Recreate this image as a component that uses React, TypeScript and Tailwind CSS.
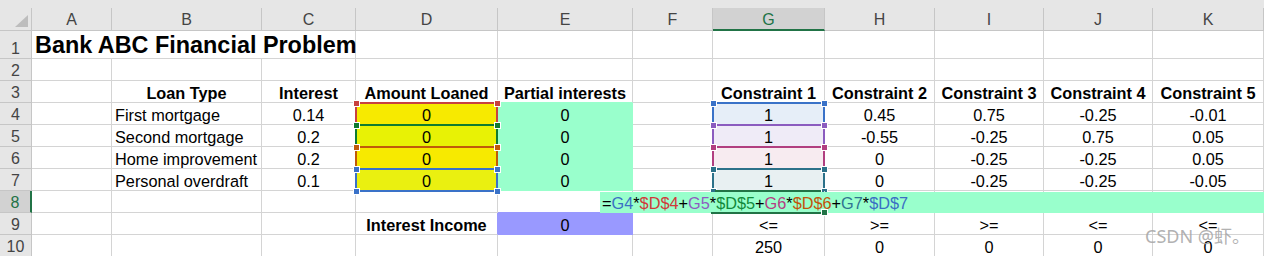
import { Fragment, type ReactNode } from 'react'

type Ref = { line: string; dot: string }

type Cell = {
  v?: ReactNode
  bold?: boolean
  left?: boolean
  title?: boolean
  cls?: string
  hl?: Ref
}

const COLS = ['A', 'B', 'C', 'D', 'E', 'F', 'G', 'H', 'I', 'J', 'K']
const ROWS = [1, 2, 3, 4, 5, 6, 7, 8, 9, 10]

const MINT = 'bg-[#99ffcc] border-[#99ffcc]'
const GRID = 'border-[#d4d4d4]'

// range highlight colours, in the order the formula references them
const blue: Ref = { line: 'border-[#3a72c8]', dot: 'bg-[#3a72c8]' }
const red: Ref = { line: 'border-[#c8413f]', dot: 'bg-[#c8413f]' }
const purple: Ref = { line: 'border-[#8b5cbf]', dot: 'bg-[#8b5cbf]' }
const green: Ref = { line: 'border-[#0f7b30]', dot: 'bg-[#0f7b30]' }
const magenta: Ref = { line: 'border-[#b13f80]', dot: 'bg-[#b13f80]' }
const orange: Ref = { line: 'border-[#c05a0a]', dot: 'bg-[#c05a0a]' }
const teal: Ref = { line: 'border-[#2c7189]', dot: 'bg-[#2c7189]' }

const loans: [string, number, number[]][] = [
  ['First mortgage', 0.14, [0.45, 0.75, -0.25, -0.01]],
  ['Second mortgage', 0.2, [-0.55, -0.25, 0.75, 0.05]],
  ['Home improvement', 0.2, [0, -0.25, -0.25, 0.05]],
  ['Personal overdraft', 0.1, [0, -0.25, -0.25, -0.05]],
]

const amountFill = [
  'bg-[#f7ea00] border-[#f7ea00]',
  'bg-[#e8f205] border-[#e8f205]',
  'bg-[#f7ea00] border-[#f7ea00]',
  'bg-[#eaf010] border-[#eaf010]',
]
const amountRef = [red, green, orange, blue]
const constraintFill = [
  'bg-[#e6eef8] border-[#e6eef8]',
  'bg-[#efebf7] border-[#efebf7]',
  'bg-[#f7ebf0] border-[#f7ebf0]',
  'bg-[#e8f0f2] border-[#e8f0f2]',
]
const constraintRef = [blue, purple, magenta, teal]

const sheet: Record<string, Cell> = {
  A1: { v: 'Bank ABC Financial Problem', title: true },
  B3: { v: 'Loan Type', bold: true },
  C3: { v: 'Interest', bold: true },
  D3: { v: 'Amount Loaned', bold: true },
  E3: { v: 'Partial interests', bold: true, cls: 'border-r-[#d4d4d4] border-b-[#99ffcc]' },
  G3: { v: 'Constraint 1', bold: true },
  H3: { v: 'Constraint 2', bold: true },
  I3: { v: 'Constraint 3', bold: true },
  J3: { v: 'Constraint 4', bold: true },
  K3: { v: 'Constraint 5', bold: true },
  E8: { cls: 'border-r-[#d4d4d4] border-b-[#9999ff]' },
  D9: { v: 'Interest Income', bold: true, cls: 'border-r-[#9999ff] border-b-[#d4d4d4]' },
  E9: { v: 0, cls: 'bg-[#9999ff] border-[#9999ff]' },
  G9: { v: '<=' },
  H9: { v: '>=' },
  I9: { v: '>=' },
  J9: { v: '<=' },
  K9: { v: '<=' },
  G10: { v: 250 },
  H10: { v: 0 },
  I10: { v: 0 },
  J10: { v: 0 },
  K10: { v: 0 },
}

loans.forEach(([name, rate, coeffs], i) => {
  const r = i + 4
  sheet[`B${r}`] = { v: name, left: true }
  sheet[`C${r}`] = { v: rate }
  sheet[`D${r}`] = { v: 0, cls: amountFill[i], hl: amountRef[i] }
  sheet[`E${r}`] = { v: 0, cls: MINT }
  sheet[`G${r}`] = { v: 1, cls: constraintFill[i], hl: constraintRef[i] }
  ;['H', 'I', 'J', 'K'].forEach((c, j) => {
    sheet[`${c}${r}`] = { v: coeffs[j] }
  })
})

const formula: [string, string][] = [
  ['=', ''],
  ['G4', 'text-[#3a6fc4]'],
  ['*', ''],
  ['$D$4', 'text-[#d13a3a]'],
  ['+', ''],
  ['G5', 'text-[#8e5cc0]'],
  ['*', ''],
  ['$D$5', 'text-[#128a3c]'],
  ['+', ''],
  ['G6', 'text-[#b43e82]'],
  ['*', ''],
  ['$D$6', 'text-[#c2540a]'],
  ['+', ''],
  ['G7', 'text-[#2f7391]'],
  ['*', ''],
  ['$D$7', 'text-[#3a6fc4]'],
]

function RefBox({ line, dot }: Ref) {
  const sq = `absolute h-[7px] w-[7px] border border-white ${dot}`
  return (
    <div
      className={`pointer-events-none absolute -left-[1px] -top-[1px] h-[calc(100%+3px)] w-[calc(100%+2px)] border-2 ${line}`}
    >
      <span className={`${sq} -left-[4px] -top-[4px]`} />
      <span className={`${sq} -right-[5px] -top-[4px]`} />
      <span className={`${sq} -bottom-[5px] -left-[4px]`} />
      <span className={`${sq} -bottom-[5px] -right-[5px]`} />
    </div>
  )
}

// G8 is being edited: the editor box spills over F8..K8, framed by the active-cell border
function ActiveEditor() {
  return (
    <>
      <div className="absolute -left-[113px] top-[1px] flex h-[21px] w-[664px] items-end whitespace-nowrap bg-[#99ffcc] pb-[1px] pl-[2px] text-[16.3px] leading-[18px]">
        {formula.map(([t, color], i) => (
          <span key={i} className={color}>
            {t}
          </span>
        ))}
      </div>
      <div className="absolute left-[2px] -top-[1px] h-[2px] w-[106px] bg-[#217346]" />
      <div className="absolute -left-[2px] top-[21px] h-[2px] w-[112px] bg-[#217346]" />
      <div className="absolute left-[108px] top-[18px] h-[7px] w-[7px] border border-white bg-[#217346]" />
    </>
  )
}

function SheetCell({ id }: { id: string }) {
  const cell = sheet[id] ?? {}
  if (cell.title) {
    return (
      <div className="col-span-3 flex items-end whitespace-nowrap border-b border-r border-[#d4d4d4] pl-[3px] text-[23.4px] font-bold leading-[26px]">
        {cell.v}
      </div>
    )
  }
  if (id === 'G8') {
    return (
      <div className="relative border-b border-r border-[#d4d4d4]">
        <ActiveEditor />
      </div>
    )
  }
  return (
    <div
      className={`flex items-end whitespace-nowrap border-b border-r leading-[18px] ${
        cell.left ? 'justify-start pl-[3px]' : 'justify-center'
      } ${cell.bold ? 'font-bold' : ''} ${cell.cls ?? GRID} ${cell.hl ? 'relative' : ''}`}
    >
      {cell.v}
      {cell.hl && <RefBox {...cell.hl} />}
    </div>
  )
}

export default function App() {
  return (
    <div className="relative h-[256px] w-[1264px] overflow-hidden bg-white font-['Liberation_Sans',Arial,sans-serif] text-[16.3px] text-black">
      <div className="h-[8px] bg-[#e6e6e6]" />
      <div className="grid grid-cols-[32px_80px_150px_94px_142px_135px_80px_112px_110px_109px_109px_111px] grid-rows-[23px_28px_22px_22px_22px_22px_22px_22px_22px_22px_22px]">
        {/* corner + column letters */}
        <div className="flex items-end justify-end border-b border-r border-[#c6c6c6] bg-[#e6e6e6] pb-[3px] pr-[3px]">
          <svg width="13" height="12" viewBox="0 0 13 12">
            <path d="M13 0V12H0Z" fill="#bdbdbd" />
          </svg>
        </div>
        {COLS.map((c) =>
          c === 'G' ? (
            <div
              key={c}
              className="flex items-end justify-center border-b-2 border-r border-[#c6c6c6] border-b-[#217346] bg-[#d2d2d2] text-[16px] leading-[18px] text-[#217346]"
            >
              {c}
            </div>
          ) : (
            <div
              key={c}
              className="flex items-end justify-center border-b border-r border-[#c6c6c6] bg-[#e6e6e6] pb-[1px] text-[16px] leading-[18px] text-[#444]"
            >
              {c}
            </div>
          )
        )}

        {ROWS.map((r) => (
          <Fragment key={r}>
            {r === 8 ? (
              <div className="flex items-end justify-center border-b border-r-2 border-[#c6c6c6] border-r-[#217346] bg-[#d2d2d2] text-[16px] leading-[18px] text-[#217346]">
                {r}
              </div>
            ) : (
              <div className="flex items-end justify-center border-b border-r border-[#c6c6c6] bg-[#e6e6e6] text-[16px] leading-[18px] text-[#444]">
                {r}
              </div>
            )}
            {COLS.map((c) =>
              r === 1 && (c === 'B' || c === 'C') ? null : <SheetCell key={c} id={`${c}${r}`} />
            )}
          </Fragment>
        ))}
      </div>

      <div className="absolute bottom-[8px] right-[14px] font-['Noto_Sans','Noto_Sans_CJK_SC',sans-serif] text-[18px] leading-[24px] text-[#a8a8a8]/90">
        CSDN @虾。
      </div>
    </div>
  )
}
